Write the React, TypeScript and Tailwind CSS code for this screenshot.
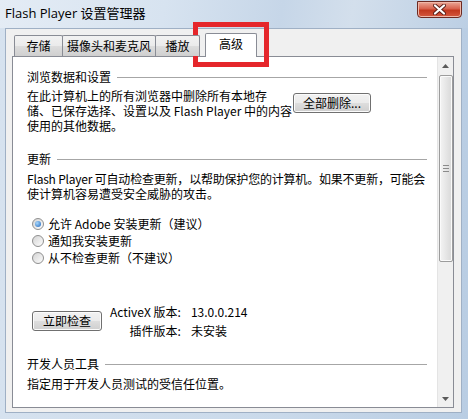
import React from "react";

const btnBg =
  "border border-[#707070] rounded-[3px] bg-[linear-gradient(#f2f2f2,#ebebeb_48%,#dddddd_52%,#cfcfcf)] shadow-[inset_0_0_0_1px_#fbfbfb] text-black";

function SectionHeader({ title }: { title: string }) {
  return (
    <div className="flex items-center h-[16px] leading-[16px]">
      <span>{title}</span>
      <div className="ml-[6px] flex-1 h-px bg-[#a6a6a6]" />
    </div>
  );
}

function Radio({ checked, label }: { checked?: boolean; label: string }) {
  return (
    <div className="flex items-center h-[17px] leading-[17px]">
      <span className="ml-[5px] w-[12px] h-[12px] rounded-full border border-[#8f8f8f] bg-[linear-gradient(135deg,#d4d4d4,#fdfdfd)] flex items-center justify-center">
        {checked && (
          <span className="w-[6px] h-[6px] rounded-full bg-[radial-gradient(circle_at_35%_35%,#a8d8fb,#1f66bf)]" />
        )}
      </span>
      <span className="ml-[4px]">{label}</span>
    </div>
  );
}

function Tab({ label, w, selected }: { label: string; w: string; selected?: boolean }) {
  if (selected) {
    return (
      <div
        className={`${w} h-[24px] bg-white border-t border-x border-[#898c95] rounded-t-[2px] flex items-center justify-center pb-[3px]`}
      >
        {label}
      </div>
    );
  }
  return (
    <div
      className={`${w} h-[21px] mb-px border-t border-x border-[#898c95] rounded-t-[2px] bg-[linear-gradient(#f2f2f2,#ebebeb_48%,#dddddd_52%,#cfcfcf)] flex items-center justify-center`}
    >
      {label}
    </div>
  );
}

function ScrollBar() {
  return (
    <div className="w-[16px] bg-[#f0f0f0] border-l border-[#e4e4e4] flex flex-col items-center">
      <div className="h-[17px] w-full flex items-center justify-center">
        <svg width="7" height="4" viewBox="0 0 7 4">
          <path d="M0 4 L3.5 0 L7 4 Z" fill="#5a5a5a" />
        </svg>
      </div>
      <div className="mt-px w-[14px] h-[187px] rounded-[2px] border border-[#9c9c9c] bg-[linear-gradient(90deg,#f4f4f4,#e6e6e6_50%,#d8d8d8)] shadow-[inset_0_0_0_1px_#fafafa] flex flex-col items-center justify-center gap-[2px]">
        <div className="w-[6px] h-px bg-[#8a8a8a]" />
        <div className="w-[6px] h-px bg-[#8a8a8a]" />
        <div className="w-[6px] h-px bg-[#8a8a8a]" />
      </div>
      <div className="flex-1" />
      <div className="h-[17px] w-full flex items-center justify-center">
        <svg width="7" height="4" viewBox="0 0 7 4">
          <path d="M0 0 L7 0 L3.5 4 Z" fill="#5a5a5a" />
        </svg>
      </div>
    </div>
  );
}

export default function App() {
  return (
    <div className="relative w-[468px] h-[419px] overflow-hidden flex flex-col bg-[linear-gradient(90deg,#d6e2ef,#c9d9ea_60%,#b9cde3)] text-[12px] text-black font-['Noto_Sans_CJK_SC',sans-serif]">
      {/* title bar */}
      <div className="h-[28px] flex items-start bg-[linear-gradient(100deg,#e4ecf5,#d7e3f0_35%,#c6d6e8_60%,#d3dfec_75%,#bccfe4)]">
        <span className="self-center ml-[5px] mb-[3px] leading-[16px] text-[13px] font-['Open_Sans','Noto_Sans_CJK_SC',sans-serif]">
          Flash Player 设置管理器
        </span>
        <div className="ml-auto mt-px mr-[6px] w-[45px] h-[17px] rounded-b-[4px] border border-[#6d2a22] bg-[linear-gradient(#eaa898,#d8624d_45%,#c2381f_55%,#d4583f)] shadow-[inset_0_0_0_1px_#f0b7a8] flex items-center justify-center">
          <svg width="13" height="11" viewBox="0 0 13 11">
            <path
              d="M2 1.5 L11 9.5 M11 1.5 L2 9.5"
              stroke="#5a1f18"
              strokeWidth="4"
              strokeLinecap="round"
            />
            <path
              d="M2 1.5 L11 9.5 M11 1.5 L2 9.5"
              stroke="#ffffff"
              strokeWidth="2.2"
              strokeLinecap="round"
            />
          </svg>
        </div>
      </div>

      {/* dialog body */}
      <div className="ml-[5px] mr-[6px] h-[385px] border border-[#9fb0c5] bg-[#f0f0f0] flex flex-col">
        <div className="relative z-10 h-[28px] -mb-px pl-[8px] flex items-end">
          <Tab label="存储" w="w-[49px]" />
          <div className="-ml-px">
            <Tab label="摄像头和麦克风" w="w-[94px]" />
          </div>
          <div className="-ml-px">
            <Tab label="播放" w="w-[45px]" />
          </div>
          <div className="ml-[5px]">
            <Tab label="高级" w="w-[52px]" selected />
          </div>
        </div>

        <div className="ml-[6px] mr-[7px] h-[352px] border border-[#898c95] bg-white flex">
          <div className="flex-1 pl-[14px] pr-[10px] flex flex-col whitespace-nowrap overflow-hidden">
            <div className="mt-[12px]">
              <SectionHeader title="浏览数据和设置" />
            </div>
            <div className="mt-[3px] flex items-start">
              <div className="w-[266px] leading-[15px]">
                在此计算机上的所有浏览器中删除所有本地存
                <br />
                储、已保存选择、设置以及 Flash Player 中的内容
                <br />
                使用的其他数据。
              </div>
              <button className={`mt-[5px] w-[78px] h-[20px] leading-[18px] ${btnBg}`}>全部删除...</button>
            </div>

            <div className="mt-[18px]">
              <SectionHeader title="更新" />
            </div>
            <div className="mt-[4px] leading-[15px]">
              <span className="tracking-[-0.2px]">
                Flash Player 可自动检查更新，以帮助保护您的计算机。如果不更新，可能会
              </span>
              <br />
              使计算机容易遭受安全威胁的攻击。
            </div>

            <div className="mt-[14px] flex flex-col">
              <Radio checked label="允许 Adobe 安装更新（建议）" />
              <Radio label="通知我安装更新" />
              <Radio label="从不检查更新（不建议）" />
            </div>

            <div className="mt-[36px] flex items-start">
              <button className={`ml-[5px] mt-[9px] w-[70px] h-[20px] leading-[18px] ${btnBg}`}>立即检查</button>
              <div className="ml-[8px] grid grid-cols-[auto_auto] gap-x-[10px] leading-[19px]">
                <span className="text-right">ActiveX 版本:</span>
                <span>13.0.0.214</span>
                <span className="text-right">插件版本:</span>
                <span>未安装</span>
              </div>
            </div>

            <div className="mt-[16px]">
              <SectionHeader title="开发人员工具" />
            </div>
            <div className="mt-[4px] leading-[15px]">指定用于开发人员测试的受信任位置。</div>
          </div>
          <ScrollBar />
        </div>
      </div>

      {/* red highlight box */}
      <div className="absolute left-[193px] top-[22px] w-[76px] h-[45px] border-[5px] border-[#e5262b]" />
    </div>
  );
}
